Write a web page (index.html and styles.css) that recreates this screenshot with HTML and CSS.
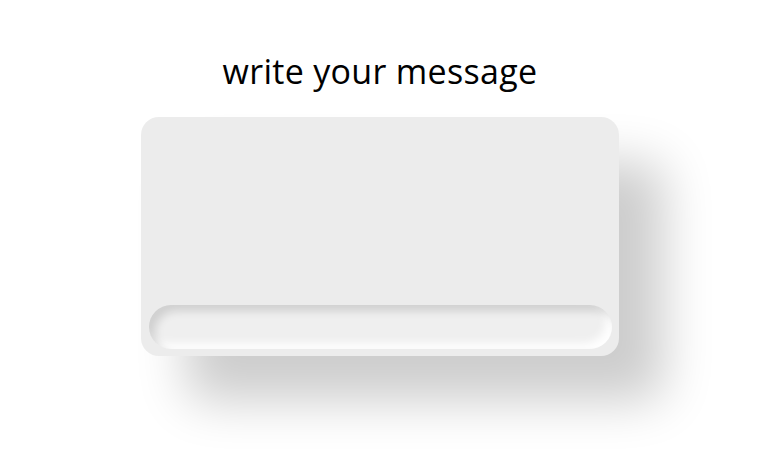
FILE: index.html
```html
<!DOCTYPE html>
<html>
<head>
<meta charset="utf-8">
<link rel="stylesheet" href="styles.css">
</head>
<body>
<main class="page">
  <h1 class="title">write your message</h1>
  <div class="card">
    <div class="card-body"></div>
    <input class="message-input" type="text" aria-label="message">
  </div>
</main>
</body>
</html>
```
FILE: styles.css
```css
html, body {
  margin: 0;
  padding: 0;
  background: #ffffff;
}
.page {
  display: flex;
  flex-direction: column;
  align-items: center;
  padding-top: 49px;
  padding-left: 3px;
  min-height: 456px;
  box-sizing: border-box;
}
.title {
  margin: 0;
  font-family: "Open Sans", "Noto Sans", sans-serif;
  font-weight: 400;
  font-size: 34px;
  line-height: 44px;
  letter-spacing: 0.3px;
  color: #000;
}
.card {
  margin-top: 24px;
  width: 478px;
  height: 239px;
  box-sizing: border-box;
  background: #ececec;
  border-radius: 18px;
  box-shadow: 45px 45px 50px rgba(0, 0, 0, 0.2), -8px -8px 20px rgba(255, 255, 255, 0.9);
  display: flex;
  flex-direction: column;
  padding: 8px 7px 7px 8px;
}
.card-body {
  flex: 1;
}
.message-input {
  height: 44px;
  width: 100%;
  box-sizing: border-box;
  border: none;
  outline: none;
  border-radius: 22px;
  background: #efefef;
  box-shadow: inset 6px 6px 8px rgba(0, 0, 0, 0.13), inset -6px -6px 8px rgba(255, 255, 255, 0.95);
}
```
